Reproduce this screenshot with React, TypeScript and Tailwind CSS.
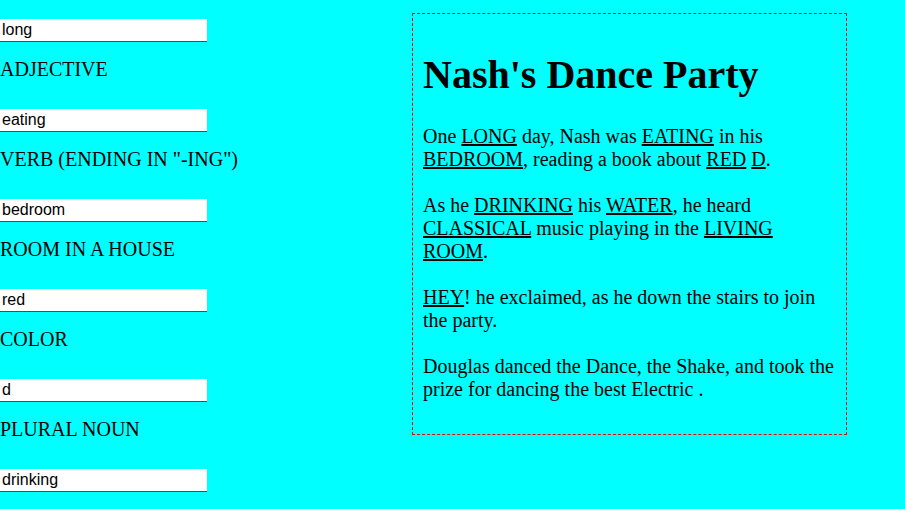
const fields = [
  {value: 'long', label: 'ADJECTIVE'},
  {value: 'eating', label: 'VERB (ENDING IN "-ING")'},
  {value: 'bedroom', label: 'ROOM IN A HOUSE'},
  {value: 'red', label: 'COLOR'},
  {value: 'd', label: 'PLURAL NOUN'},
  {value: 'drinking', label: 'VERB (ENDING IN "-ING")'},
  {value: 'water', label: 'NOUN'},
  {value: 'classical', label: 'TYPE OF MUSIC'},
  {value: 'living room', label: 'ROOM IN A HOUSE'},
  {value: 'hey', label: 'EXCLAMATION'},
]

function Word({children}: {children: string}) {
  return <span className="underline">{children}</span>
}

export default function App() {
  return (
    <div className="min-h-screen bg-[#00ffff] text-black font-['Liberation_Serif','Times_New_Roman',serif] text-[20px] leading-[23px]">
      <div className="flex items-start">
        <div className="w-[412px] shrink-0 flex flex-col pt-[19px]">
          {fields.map((f, i) => (
            <div key={i} className="flex flex-col">
              <input
                readOnly
                defaultValue={f.value}
                className="w-[207px] h-[23px] bg-white border-b border-[#2545e0] px-[2px] pb-[2px] font-['Liberation_Sans',Arial,sans-serif] text-[16px] text-black outline-none"
              />
              <p className="mt-[16px] mb-[28px] h-[23px] leading-[23px]">{f.label}</p>
            </div>
          ))}
        </div>
        <div className="mt-[13px] w-[435px] h-[422px] border border-dashed border-[#ff0000] p-[10px]">
          <h1 className="mt-[29px] mb-[28px] text-[40px] leading-[44px] font-bold">Nash's Dance Party</h1>
          <p>
            One <Word>LONG</Word> day, Nash was <Word>EATING</Word> in his <Word>BEDROOM</Word>, reading a book about <Word>RED</Word> <Word>D</Word>.
            <br />
            <br />
            As he <Word>DRINKING</Word> his <Word>WATER</Word>, he heard <Word>CLASSICAL</Word> music playing in the <Word>LIVING ROOM</Word>.
            <br />
            <br />
            <Word>HEY</Word>! he exclaimed, as he down the stairs to join the party.
            <br />
            <br />
            Douglas danced the Dance, the Shake, and took the prize for dancing the best Electric .
          </p>
        </div>
      </div>
    </div>
  )
}
